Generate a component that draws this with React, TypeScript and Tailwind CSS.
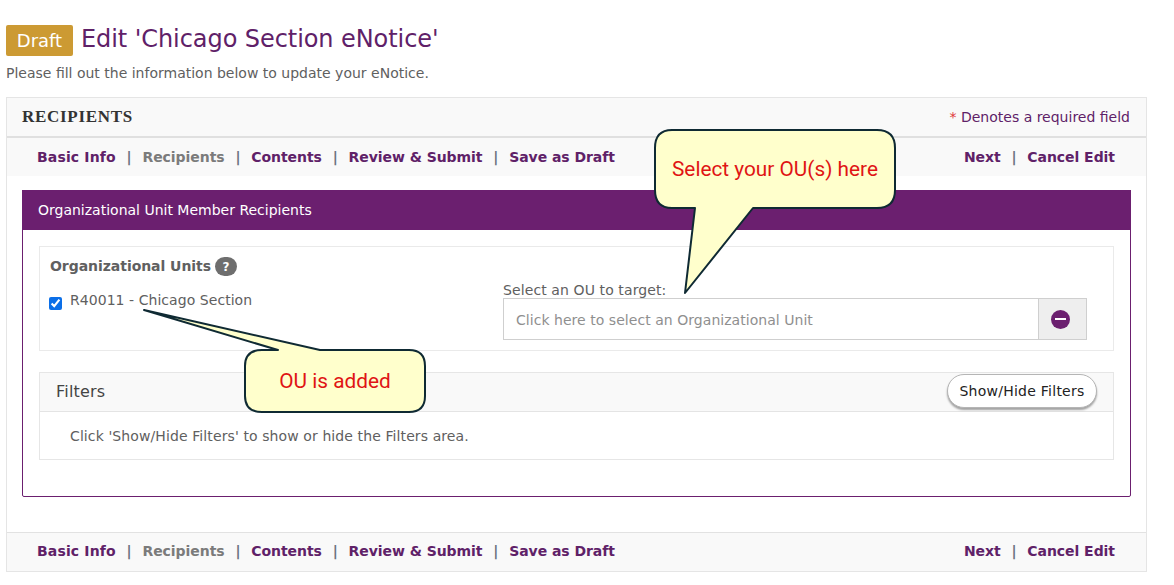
// App.tsx
const purple = "text-[#5f2168]";

function StepNav({ className = "" }: { className?: string }) {
  const Sep = () => <span className="text-[#6b7280] font-bold mx-[10.75px] tracking-normal">|</span>;
  return (
    <div className={`flex items-center justify-between pl-[30px] pr-[31px] h-[38px] bg-[#f9f9f9] text-[14px] font-bold font-['DejaVu_Sans',sans-serif] tracking-[-0.05px] ${className}`}>
      <div className={`flex items-center ${purple}`}>
        <span className="tracking-[0.15px]">Basic Info</span>
        <Sep />
        <span className="text-[#7b7b7b]">Recipients</span>
        <Sep />
        <span>Contents</span>
        <Sep />
        <span>Review &amp; Submit</span>
        <Sep />
        <span>Save as Draft</span>
      </div>
      <div className={`flex items-center ${purple}`}>
        <span>Next</span>
        <Sep />
        <span>Cancel Edit</span>
      </div>
    </div>
  );
}

function Callouts() {
  return (
    <svg className="absolute left-0 top-0" width="1174" height="585" viewBox="0 0 1174 585">
      <path
        d="M672 130 H877 Q895 130 895 148 V190 Q895 208 877 208 H753 L685 293 L695 208 H672 Q655 208 655 190 V148 Q655 130 672 130 Z"
        fill="#ffffcc"
        stroke="#0f2a33"
        strokeWidth="2"
        strokeLinejoin="round"
      />
      <path
        d="M262 350 H278 L144 310 L320 350 H409 Q425 350 425 366 V396 Q425 412 409 412 H262 Q245 412 245 396 V366 Q245 350 262 350 Z"
        fill="#ffffcc"
        stroke="#0f2a33"
        strokeWidth="2"
        strokeLinejoin="round"
      />
      <text x="775" y="176" textAnchor="middle" fill="#e01414" fontSize="20.8" fontFamily="Roboto, sans-serif">
        Select your OU(s) here
      </text>
      <text x="335" y="388" textAnchor="middle" fill="#e01414" fontSize="20.8" fontFamily="Roboto, sans-serif">
        OU is added
      </text>
    </svg>
  );
}

export default function App() {
  return (
    <div className="relative w-[1174px] h-[585px] overflow-hidden bg-white font-['DejaVu_Sans',sans-serif] text-[#555]">
      <div className="pl-[6px] pr-[27px] pt-[25px]">
        <div className="flex items-center h-[31px]">
          <span className="flex items-center justify-center w-[67px] h-[31px] rounded-[2px] bg-[#cc9a33] text-white text-[18px]">
            Draft
          </span>
          <h1 className="ml-[8px] text-[24px] leading-[27px] mb-[2px] text-[#5f2168] tracking-[-0.07px]">Edit 'Chicago Section eNotice'</h1>
        </div>
        <p className="mt-[9px] h-[17px] leading-[17px] text-[14px] text-[#606060]">
          Please fill out the information below to update your eNotice.
        </p>

        <div className="mt-[15px] h-[475px] border border-[#e5e5e5] flex flex-col">
          <div className="flex items-center justify-between h-[40px] pl-[15px] pr-[16px] bg-[#f9f9f9] border-b-2 border-[#e0e0e0]">
            <h2 className="text-[17px] font-bold text-[#333] font-['Liberation_Serif',serif] tracking-[0.7px]">RECIPIENTS</h2>
            <span className="text-[14px] text-[#5f2168]">
              <span className="text-[#e03a3a]">*</span> Denotes a required field
            </span>
          </div>
          <StepNav />

          <div className="flex-1 px-[15px] pt-[14px]">
            <div className="h-[307px] border border-[#6b1f6f] rounded-[2px]">
              <div className="flex items-center h-[40px] pl-[16px] pt-[1px] bg-[#6b1f6f] text-white text-[14px] -mx-px -mt-px">
                Organizational Unit Member Recipients
              </div>
              <div className="px-[16px] pt-[16px]">
                <div className="relative h-[105px] border border-[#eaeaea] flex">
                  <div className="w-[463px] pl-[10px] pt-[9px]">
                    <div className="flex items-center gap-[4px]">
                      <span className="text-[14px] font-bold text-[#606060] tracking-[-0.05px]">Organizational Units</span>
                      <span className="flex items-center justify-center w-[22px] h-[19px] rounded-full bg-[#6e6e6e] text-white text-[12px] font-bold">?</span>
                    </div>
                    <div className="flex items-start mt-[13px]">
                      <input type="checkbox" defaultChecked className="mt-[7px] w-[13px] h-[13px] -ml-[1px] accent-[#0b6fe8]" />
                      <span className="ml-[8px] text-[14px] text-[#606060] tracking-[0.05px]">R40011 - Chicago Section</span>
                    </div>
                  </div>
                  <div className="pt-[35px]">
                    <div className="text-[14px] leading-[16px] text-[#606060] tracking-[0.1px]">Select an OU to target:</div>
                    <div className="flex h-[42px] w-[584px] border border-[#cfcfcf]">
                      <div className="flex-1 flex items-center pl-[12px] pt-[2px] text-[14px] text-[#8f8f8f] tracking-[0.04px]">
                        Click here to select an Organizational Unit
                      </div>
                      <div className="flex items-center pl-[12px] w-[48px] bg-[#eeeeee] border-l border-[#cfcfcf]">
                        <span className="flex items-center justify-center w-[19px] h-[19px] rounded-full bg-[#6b1f6f]">
                          <span className="block w-[11px] h-[2px] bg-white" />
                        </span>
                      </div>
                    </div>
                  </div>
                </div>

                <div className="mt-[21px] h-[88px] border border-[#e6e6e6]">
                  <div className="flex items-start justify-between h-[39px] pt-[1px] pl-[16px] pr-[16px] bg-[#f9f9f9] border-b border-[#e4e4e4]">
                    <span className="text-[16px] leading-[36px] text-[#444] tracking-[0.2px]">Filters</span>
                    <button className="h-[34px] w-[150px] rounded-full bg-white border border-[#b5b5b5] shadow-[0_2px_2px_rgba(0,0,0,0.35)] text-[14px] text-[#222] tracking-[0.25px]">
                      Show/Hide Filters
                    </button>
                  </div>
                  <div className="pl-[30px] pt-[16px] text-[14px] leading-[17px] text-[#606060] tracking-[0.1px]">
                    Click 'Show/Hide Filters' to show or hide the Filters area.
                  </div>
                </div>
              </div>
            </div>
          </div>

          <div className="border-t border-[#e2e2e2]">
            <StepNav className="pb-[1px]" />
          </div>
        </div>
      </div>
      <Callouts />
    </div>
  );
}
